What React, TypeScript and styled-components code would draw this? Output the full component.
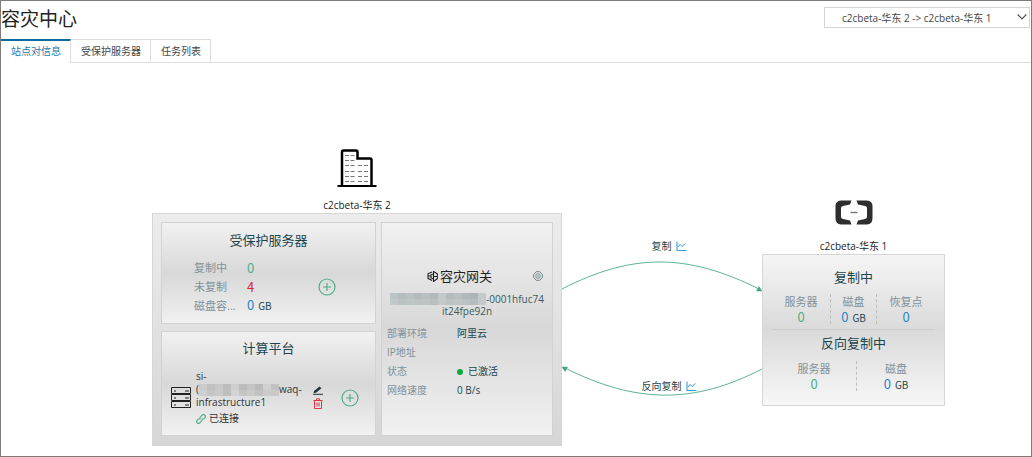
import React from "react";
import styled, { createGlobalStyle } from "styled-components";

const GlobalStyle = createGlobalStyle`
  *, *::before, *::after { box-sizing: border-box; }
  body {
    margin: 0;
    background: #fff;
    color: #1f2d33;
    font: 10px/14px "Open Sans", "Noto Sans CJK SC", sans-serif;
  }
  button, select { font: inherit; color: inherit; }
  h1, h2, h3, p, dl, dt, dd { margin: 0; font-weight: 400; }
`;

const tones = {
  green: "#4fae87",
  red: "#d9263f",
  blue: "#2a86c7",
};
type Tone = keyof typeof tones;

const Page = styled.div`
  min-height: 100vh;
  border: 1px solid #7f7b7b;
`;

const Header = styled.header`
  display: flex;
  justify-content: space-between;
  align-items: flex-start;
  height: 38px;
  padding: 6px 1px 0 0;
`;

const PageTitle = styled.h1`
  font-size: 19px;
  line-height: 24px;
  color: #222;
`;

const SelectBox = styled.div`
  position: relative;
  width: 206px;

  svg {
    position: absolute;
    top: 6px;
    right: 3px;
    pointer-events: none;
  }
`;

const PairSelect = styled.select`
  appearance: none;
  width: 100%;
  height: 21px;
  padding: 0 18px 0 17px;
  border: 1px solid #d5d5d5;
  border-radius: 0;
  background: #fff;
  color: #444;
`;

const TabBar = styled.nav`
  display: flex;
  height: 24px;
  border-bottom: 1px solid #ddd;
`;

const Tab = styled.button<{ $active?: boolean }>`
  height: 24px;
  padding: ${(p) => (p.$active ? "0 9px 2px 10px" : "0 9px 1px 10px")};
  border: 1px solid #ddd;
  border-width: ${(p) => (p.$active ? "2px 1px 0 0" : "1px 1px 1px 0")};
  border-top-color: ${(p) => (p.$active ? "#0f6ca3" : "#ddd")};
  background: #fff;
  color: ${(p) => (p.$active ? "#1a78ad" : "#444")};
  cursor: pointer;
`;

const Topology = styled.main`
  display: grid;
  grid-template-columns: 410px minmax(160px, 1fr) 183px;
  align-items: start;
  padding: 85px 86px 8px 151px;
`;

const Site = styled.section<{ $lowered?: boolean }>`
  display: flex;
  flex-direction: column;
  align-items: center;
  padding-top: ${(p) => (p.$lowered ? "52px" : "0")};
`;

const SiteName = styled.h2<{ $spaced?: boolean }>`
  padding: ${(p) => (p.$spaced ? "13px 0 0" : "9px 0 0")};
  font-size: 10px;
  line-height: 16px;
  color: #222;
`;

const SourcePanel = styled.div`
  display: grid;
  grid-template-columns: 215px 1fr;
  grid-template-rows: 102px 105px;
  gap: 7px 5px;
  width: 100%;
  padding: 8px 8px 9px;
  border: 1px solid #d6d6d6;
  background: linear-gradient(#ececec, #d6d6d6);
`;

const Card = styled.section<{ $tall?: boolean }>`
  grid-row: ${(p) => (p.$tall ? "1 / span 2" : "auto")};
  grid-column: ${(p) => (p.$tall ? "2" : "1")};
  border: 1px solid #d2d2d2;
  background: linear-gradient(#f1f1f1, #d8d8d8 50%, #f1f1f1);
`;

const CardTitle = styled.h3`
  font-size: 13px;
  line-height: 18px;
  text-align: center;
  color: #1d454c;
`;

const IconButton = styled.button`
  display: inline-flex;
  padding: 0;
  border: 0;
  background: none;
  cursor: pointer;
`;

const ServerCard = styled(Card)`
  padding-top: 8px;
`;

const ServerBody = styled.div`
  display: flex;
  align-items: center;
  justify-content: space-between;
  padding: 9px 39px 0 32px;
`;

const Stats = styled.dl`
  display: grid;
  grid-template-columns: 44px auto;
  column-gap: 9px;
  grid-auto-rows: 19px;
  align-items: center;
`;

const StatLabel = styled.dt`
  white-space: nowrap;
  font-size: 11px;
  line-height: 18px;
  color: #80919a;
`;

const StatValue = styled.dd<{ $tone: Tone }>`
  font-family: "Noto Sans CJK SC", sans-serif;
  font-size: 13px;
  line-height: 18px;
  color: ${(p) => tones[p.$tone]};
`;

const Unit = styled.span`
  padding-left: 4px;
  font-size: 10px;
  color: #1d454c;
`;

const PlatformCard = styled(Card)`
  padding-top: 7px;
`;

const PlatformBody = styled.div`
  display: grid;
  grid-template-columns: 20px 112px 23px 18px;
  column-gap: 5px;
  align-items: center;
  padding: 13px 0 0 9px;
`;

const PlatformText = styled.div`
  line-height: 13px;
  color: #333;
`;

const NameRow = styled.div`
  display: flex;
  align-items: center;
  height: 13px;
`;

const StatusRow = styled.div`
  display: flex;
  align-items: center;
  gap: 3px;
  padding-top: 3px;
`;

const Actions = styled.div`
  display: flex;
  flex-direction: column;
  gap: 3px;
`;

const Mosaic = styled.span<{ $wide?: boolean }>`
  display: inline-grid;
  grid-template-columns: repeat(${(p) => (p.$wide ? 12 : 10)}, 8px);
  grid-auto-rows: 6px;
  vertical-align: middle;
`;

const MosaicCell = styled.i<{ $shade: string }>`
  background: ${(p) => p.$shade};
`;

const GatewayCard = styled(Card)`
  padding: 43px 5px 0;
`;

const GatewayHead = styled.header`
  display: grid;
  grid-template-columns: 40px auto 1fr;
  align-items: center;
  padding-right: 4px;

  > :last-child { justify-self: end; }
`;

const GatewayTitle = styled.h3`
  display: flex;
  grid-column: 2;
  align-items: center;
  gap: 2px;
  font-size: 13px;
  line-height: 20px;
  color: #222;
`;

const GatewayId = styled.div`
  padding: 7px 0 6px;
  line-height: 12px;
  text-align: center;
  color: #3a5a5f;
`;

const IdRow = styled.div`
  display: flex;
  align-items: center;
  justify-content: center;
  height: 12px;
`;

const Details = styled.dl`
  display: grid;
  grid-template-columns: 70px 1fr;
  grid-auto-rows: 19px;
  align-items: center;

  dt { color: #80919a; }
  dd { color: #1d454c; }
`;

const Dot = styled.span`
  display: inline-block;
  width: 6px;
  height: 6px;
  margin-right: 5px;
  border-radius: 50%;
  background: #10a93c;
`;

const Links = styled.div`
  position: relative;
  padding-top: 88px;
`;

const LinkLabel = styled.div<{ $over?: boolean }>`
  display: flex;
  align-items: center;
  justify-content: center;
  gap: 4px;
  width: 100%;
  height: 20px;
  padding-left: 14px;
  color: #1d454c;
  ${(p) => p.$over && "position: absolute; bottom: 6px; left: 0;"}
`;

const Arcs = styled.svg`
  display: block;
  width: 100%;
  height: 146px;
`;

const TargetPanel = styled.div`
  width: 100%;
  height: 152px;
  padding: 13px 9px 0;
  border: 1px solid #d6d6d6;
  background: linear-gradient(#f5f5f5, #dadada 50%, #f7f7f7);
`;

const Metrics = styled.dl<{ $columns: string; $ruled?: boolean }>`
  display: grid;
  grid-template-columns: ${(p) => p.$columns};
  padding: ${(p) => (p.$ruled ? "8px 0 5px" : "9px 0 0")};
  margin-bottom: 4px;
  border-bottom: ${(p) => (p.$ruled ? "1px solid #cbcbcb" : "0")};
`;

const Metric = styled.div`
  height: 30px;
  text-align: center;

  & + & { border-left: 1px dashed #bdbdbd; }

  dt, dd { line-height: 15px; }
`;

const PlusIcon = () => (
  <svg width="18" height="18" viewBox="0 0 18 18" fill="none" stroke="#4fae87" strokeWidth="1.2">
    <circle cx="9" cy="9" r="8" />
    <path d="M9 5v8M5 9h8" />
  </svg>
);

const ChartIcon = () => (
  <svg width="11" height="11" viewBox="0 0 11 11" fill="none" stroke="#3a9bdc">
    <path d="M1 0.5V9.5H10.5" strokeWidth="1.1" />
    <path d="M2 6L4 3.5L6 5.5L9.5 2.5" />
  </svg>
);

const BuildingIcon = () => (
  <svg width="40" height="40" viewBox="0 0 40 40" fill="none" stroke="#000">
    <path d="M5 38V4Q5 2.500 6.500 2.500H19Q20.500 2.500 20.500 4V10.500H33Q34.500 10.500 34.500 12V38" strokeWidth="2.500" />
    <path d="M0.500 38H39.500" strokeWidth="2.200" />
    <path
      d="M8 7.500H12M13.500 7.500H17.500M8 12.500H12M13.500 12.500H17.500M8 17.500H12M13.500 17.500H17.500M21 17.500H25M27 17.500H31M8 23.500H12M13.500 23.500H17.500M21 23.500H25M27 23.500H31M8 28.500H12M13.500 28.500H17.500M21 28.500H25M27 28.500H31M8 33.500H12M13.500 33.500H17.500M21 33.500H25M27 33.500H31"
      stroke="#777"
    />
  </svg>
);

const CloudIcon = () => (
  <svg width="38" height="25" viewBox="0 0 38 25">
    <path
      fill="#2e2e2e"
      d="M16.500 0.500H6Q0.500 1 0.500 6V18Q0.500 24 6 24.500H16.500L15 20.500L8 19Q6 18.500 6 17V8Q6 6.500 8 6L15 4.500ZM21.500 0.500H32Q37.500 1 37.500 6V18Q37.500 24 32 24.500H21.500L23 20.500L30 19Q32 18.500 32 17V8Q32 6.500 30 6L23 4.500Z"
    />
    <path d="M15.500 12.500H22.500" stroke="#777" strokeWidth="1.4" />
  </svg>
);

const RackIcon = () => (
  <svg width="20" height="21" viewBox="0 0 20 21" fill="none" stroke="#222">
    <path d="M0.500 0.500H19.500V6.500H0.500ZM0.500 7.500H19.500V13.500H0.500ZM0.500 14.500H19.500V20.500H0.500Z" />
    <path d="M3 4H5M14 4H18M3 11H5M14 11H18M3 18H5M14 18H18" />
  </svg>
);

const EditIcon = () => (
  <svg width="10" height="9" viewBox="0 0 10 9">
    <path d="M0.500 7L1 5L6.500 0.500L8.500 2.300L3 6.800Z" fill="#1d353b" />
    <path d="M0 8.300H10" stroke="#1d353b" />
  </svg>
);

const TrashIcon = () => (
  <svg width="10" height="11" viewBox="0 0 10 11" fill="none" stroke="#dc3545">
    <path d="M0.500 2.500H9.500M3.500 2.500V0.800H6.500V2.500M1.500 2.500V10.500H8.500V2.500M4 4.500V8.500M6 4.500V8.500" />
  </svg>
);

const ChainIcon = () => (
  <svg width="10" height="10" viewBox="0 0 10 10" fill="none" stroke="#4fae87" strokeWidth="1.200">
    <path d="M4.300 5.700A1.900 1.900 0 0 1 4.300 3.200L6.200 1.200A1.800 1.800 0 0 1 8.800 3.800L7.300 5.300M5.700 4.300A1.900 1.900 0 0 1 5.700 6.800L3.800 8.800A1.800 1.800 0 0 1 1.200 6.200L2.700 4.700" />
  </svg>
);

const GatewayIcon = () => (
  <svg width="11" height="11" viewBox="0 0 11 11" fill="none" stroke="#222" strokeWidth="1.1">
    <path d="M5 1L1 2.800V7.300L5 9.500M6.500 0.500L10.300 2.800V7.800L6.500 10.500ZM6.500 3L4 3.800V7L6.500 8M1 5H4M6.500 5.500H10.300" />
  </svg>
);

const GearIcon = () => (
  <svg width="10" height="10" viewBox="0 0 10 10" fill="none" stroke="#5c7c7c">
    <path d="M3.300 0.700H6.700L9.400 3.500V6.500L6.700 9.300H3.300L0.600 6.500V3.500Z" strokeWidth="0.9" />
    <circle cx="5" cy="5" r="2.300" strokeWidth="0.800" />
    <circle cx="5" cy="5" r="0.700" fill="#5c7c7c" stroke="none" />
  </svg>
);

const idShades = [
  "#bcc5c6", "#b5bdbf", "#b9c2c3", "#b3bbbd", "#b9c0c1", "#b1babb",
  "#c2c8c9", "#b3bcbd", "#b7bfc0", "#b0b9ba", "#acb6b8", "#c3cacb",
  "#c1c8c9", "#bac2c3", "#bec5c6", "#bbc2c3", "#bec4c5", "#b7bfc0",
  "#c3c9ca", "#bac2c3", "#bfc5c6", "#b9c1c2", "#b3bcbd", "#c4cacb",
];
const nameShades = [
  "#cccccc", "#c0c0c0", "#c8c8c8", "#bdbdbd", "#cfcfcf",
  "#bcbcbc", "#c5c5c5", "#bababa", "#d0d0d0", "#c1c1c1",
  "#d0d0d0", "#c5c5c5", "#c9c9c9", "#bebebe", "#d4d4d4",
  "#c5c5c5", "#cacaca", "#c1c1c1", "#cccccc", "#c8c8c8",
];

const Masked = ({ shades, wide }: { shades: string[]; wide?: boolean }) => (
  <Mosaic $wide={wide} aria-hidden="true">
    {shades.map((shade, i) => (
      <MosaicCell key={i} $shade={shade} />
    ))}
  </Mosaic>
);

const MetricItem = ({ label, tone, unit }: { label: string; tone: Tone; unit?: string }) => (
  <Metric>
    <StatLabel>{label}</StatLabel>
    <StatValue $tone={tone}>
      0{unit && <Unit>{unit}</Unit>}
    </StatValue>
  </Metric>
);

export default function App() {
  return (
    <Page>
      <GlobalStyle />
      <Header>
        <PageTitle>容灾中心</PageTitle>
        <SelectBox>
          <PairSelect aria-label="站点对">
            <option>c2cbeta-华东 2 -&gt; c2cbeta-华东 1</option>
          </PairSelect>
          <svg width="10" height="8" viewBox="0 0 10 8" fill="none" stroke="#555" strokeWidth="1.2">
            <path d="M0.700 1.500L5 6L9.300 1.500" />
          </svg>
        </SelectBox>
      </Header>

      <TabBar>
        <Tab $active>站点对信息</Tab>
        <Tab>受保护服务器</Tab>
        <Tab>任务列表</Tab>
      </TabBar>

      <Topology>
        <Site>
          <BuildingIcon />
          <SiteName>c2cbeta-华东 2</SiteName>
          <SourcePanel>
            <ServerCard>
              <CardTitle>受保护服务器</CardTitle>
              <ServerBody>
                <Stats>
                  <StatLabel>复制中</StatLabel>
                  <StatValue $tone="green">0</StatValue>
                  <StatLabel>未复制</StatLabel>
                  <StatValue $tone="red">4</StatValue>
                  <StatLabel>磁盘容...</StatLabel>
                  <StatValue $tone="blue">
                    0<Unit>GB</Unit>
                  </StatValue>
                </Stats>
                <IconButton aria-label="添加服务器"><PlusIcon /></IconButton>
              </ServerBody>
            </ServerCard>

            <PlatformCard>
              <CardTitle>计算平台</CardTitle>
              <PlatformBody>
                <RackIcon />
                <PlatformText>
                  <div>si-</div>
                  <NameRow>
                    (<Masked shades={nameShades} />waq-
                  </NameRow>
                  <div>infrastructure1</div>
                  <StatusRow><ChainIcon />已连接</StatusRow>
                </PlatformText>
                <Actions>
                  <IconButton aria-label="编辑"><EditIcon /></IconButton>
                  <IconButton aria-label="删除"><TrashIcon /></IconButton>
                </Actions>
                <IconButton aria-label="添加计算平台"><PlusIcon /></IconButton>
              </PlatformBody>
            </PlatformCard>

            <GatewayCard $tall>
              <GatewayHead>
                <GatewayTitle><GatewayIcon />容灾网关</GatewayTitle>
                <IconButton aria-label="设置"><GearIcon /></IconButton>
              </GatewayHead>
              <GatewayId>
                <IdRow><Masked shades={idShades} wide />-0001hfuc74</IdRow>
                it24fpe92n
              </GatewayId>
              <Details>
                <dt>部署环境</dt>
                <dd>阿里云</dd>
                <dt>IP地址</dt>
                <dd />
                <dt>状态</dt>
                <dd><Dot />已激活</dd>
                <dt>网络速度</dt>
                <dd>0 B/s</dd>
              </Details>
            </GatewayCard>
          </SourcePanel>
        </Site>

        <Links>
          <LinkLabel>
            复制
            <IconButton aria-label="复制流量"><ChartIcon /></IconButton>
          </LinkLabel>
          <Arcs viewBox="0 0 200 146" preserveAspectRatio="none" fill="none" stroke="#5fb493">
            <path d="M0 33C70 -3 125 -3 197 33" />
            <path d="M200 113C132 148 75 148 3 112" />
            <path d="M200 35L194.500 35L197 30.500Z" fill="#3fa57c" stroke="#3fa57c" strokeWidth="0.500" />
            <path d="M0 111L5.500 111L3 115.500Z" fill="#3fa57c" stroke="#3fa57c" strokeWidth="0.500" />
          </Arcs>
          <LinkLabel $over>
            反向复制
            <IconButton aria-label="反向复制流量"><ChartIcon /></IconButton>
          </LinkLabel>
        </Links>

        <Site $lowered>
          <CloudIcon />
          <SiteName $spaced>c2cbeta-华东 1</SiteName>
          <TargetPanel>
            <CardTitle>复制中</CardTitle>
            <Metrics $columns="58px 46px 1fr" $ruled>
              <MetricItem label="服务器" tone="green" />
              <MetricItem label="磁盘" tone="blue" unit="GB" />
              <MetricItem label="恢复点" tone="blue" />
            </Metrics>
            <CardTitle>反向复制中</CardTitle>
            <Metrics $columns="84px 1fr">
              <MetricItem label="服务器" tone="green" />
              <MetricItem label="磁盘" tone="blue" unit="GB" />
            </Metrics>
          </TargetPanel>
        </Site>
      </Topology>
    </Page>
  );
}
